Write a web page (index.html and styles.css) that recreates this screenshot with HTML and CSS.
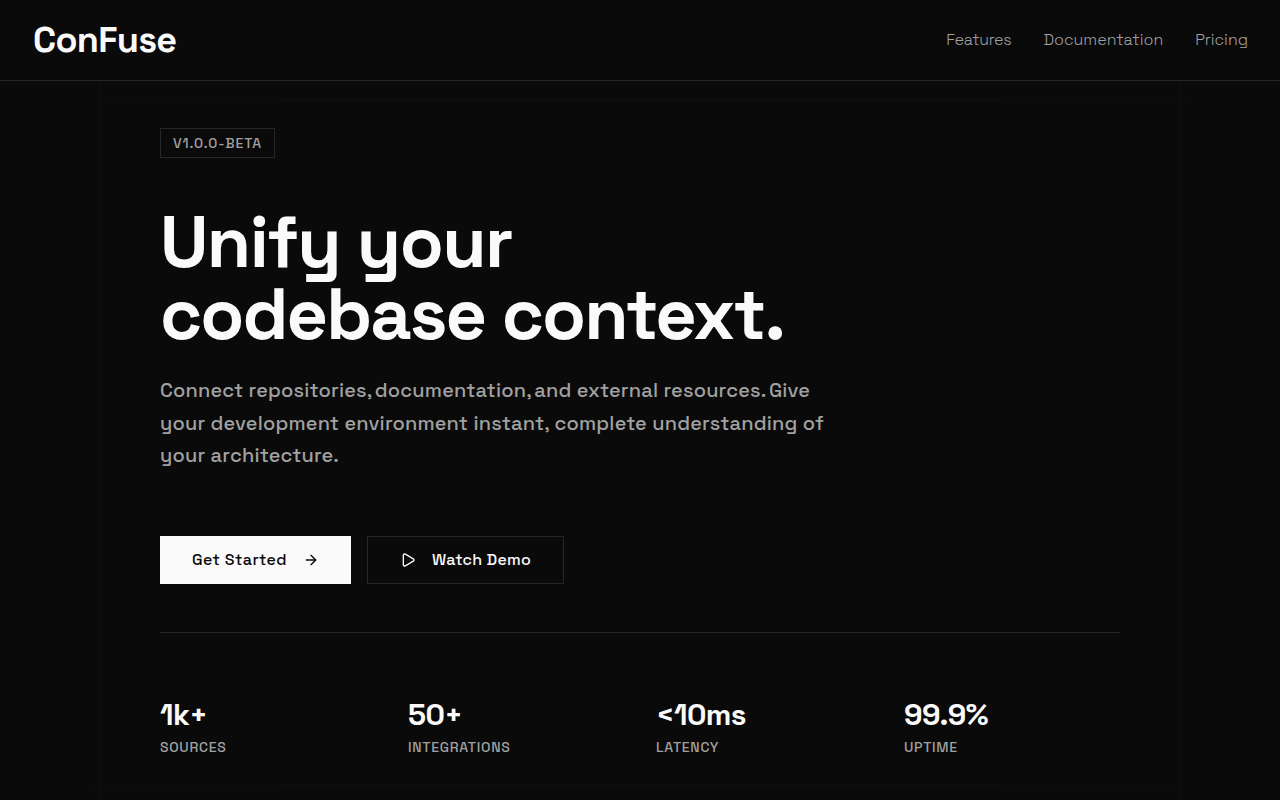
FILE: index.html
```
<!DOCTYPE html>
<html lang="en">
<head>
	<meta charset="utf-8">
	<title>ConFuse</title>
	<link rel="stylesheet" href="styles.css">
</head>
<body>
	<header class="header">
		<a class="logo" href="#">ConFuse</a>
		<nav class="nav">
			<a class="nav-first" href="#">Features</a>
			<a href="#">Documentation</a>
			<a href="#">Pricing</a>
		</nav>
	</header>

	<main class="hero">
		<!-- faint guide lines -->
		<span class="line line-left"></span>
		<span class="line line-right"></span>
		<span class="line line-top"></span>
		<span class="line line-bottom"></span>

		<div class="container">
			<div class="badge">V1.0.0-BETA</div>

			<h1 class="title">Unify your<br><span class="title-tight">codebase context.</span></h1>

			<p class="desc">
				Connect repositories,<span class="gap"> </span>documentation,<span class="gap"> </span>and external resources.<span class="gap"> </span>Give
				your development environment instant, complete understanding of
				your architecture.
			</p>

			<div class="actions">
				<a class="btn btn-primary" href="#">
					Get Started
					<svg width="16" height="16" viewBox="0 0 24 24">
						<path d="M5 12h14"/>
						<path d="m12 5 7 7-7 7"/>
					</svg>
				</a>
				<a class="btn btn-outline" href="#">
					<svg width="16" height="16" viewBox="0 0 24 24">
						<path d="M5 5a2 2 0 0 1 3.008-1.728l11.997 6.998a2 2 0 0 1 .003 3.458l-12 7A2 2 0 0 1 5 19z"/>
					</svg>
					Watch Demo
				</a>
			</div>

			<div class="stats">
				<div class="stat">
					<div class="stat-value">1k+</div>
					<div class="stat-label">SOURCES</div>
				</div>
				<div class="stat">
					<div class="stat-value">50+</div>
					<div class="stat-label">INTEGRATIONS</div>
				</div>
				<div class="stat">
					<div class="stat-value">&lt;10ms</div>
					<div class="stat-label">LATENCY</div>
				</div>
				<div class="stat">
					<div class="stat-value">99.9%</div>
					<div class="stat-label">UPTIME</div>
				</div>
			</div>
		</div>
	</main>
</body>
</html>
```
FILE: styles.css
```
*{
	margin: 0;
	padding: 0;
	box-sizing: border-box;
}
body{
	height: 100vh;
	overflow: hidden;
	display: flex;
	flex-direction: column;
	background: #0a0a0a;
	color: #fafafa;
	font-family: "Space Grotesk", Inter, sans-serif;
}
a{
	color: inherit;
	text-decoration: none;
}

/* header */
.header{
	height: 81px;
	flex: none;
	padding: 0 32px;
	display: flex;
	align-items: center;
	justify-content: space-between;
	border-bottom: 1px solid #262626;
}
.logo{
	padding-left: 1px;
	font-size: 36px;
	font-weight: 700;
	line-height: 40px;
	letter-spacing: -0.02em;
}
.nav{
	display: flex;
	gap: 32px;
	font-size: 16px;
	font-weight: 350;
	line-height: 24px;
	color: #a1a1a1;
}
.nav-first{
	letter-spacing: -0.02em;
}

/* hero */
.hero{
	flex: 1;
	position: relative;
	padding-top: 47px;
}
.line{
	position: absolute;
	background: #0e0e0e;
}
.line-left, .line-right{
	top: 0;
	bottom: 0;
	width: 1px;
}
.line-left{
	left: 100px;
}
.line-right{
	right: 99px;
}
.line-top, .line-bottom{
	left: 0;
	right: 0;
	height: 1px;
	background: linear-gradient(to right, #0a0a0a, #101010 30%, #101010 70%, #0a0a0a);
}
.line-top{
	top: 18px;
}
.line-bottom{
	bottom: 14px;
}
.container{
	position: relative;
	width: 960px;
	margin: 0 auto;
}
.badge{
	width: fit-content;
	height: 30px;
	padding: 4px 12px;
	border: 1px solid #262626;
	font-size: 14px;
	font-weight: 500;
	line-height: 20px;
	letter-spacing: 0.88px;
	color: #a1a1a1;
}
.title{
	margin-top: 48px;
	font-size: 72px;
	font-weight: 700;
	line-height: 1;
	letter-spacing: -0.021em;
}
.title-tight{
	letter-spacing: -0.026em;
}
.desc{
	max-width: 672px;
	margin-top: 24px;
	font-size: 20px;
	font-weight: 500;
	line-height: 1.625;
	letter-spacing: 0.18px;
	color: #a1a1a1;
}
.gap{
	word-spacing: -2.8px;
}
.actions{
	margin-top: 64.5px;
	display: flex;
	gap: 16px;
}
.btn{
	height: 48px;
	padding: 0 32px;
	display: flex;
	align-items: center;
	gap: 16px;
	font-size: 16px;
	font-weight: 500;
	line-height: 24px;
}
.btn svg{
	fill: none;
	stroke: currentColor;
	stroke-width: 2;
	stroke-linecap: round;
	stroke-linejoin: round;
}
.btn-primary{
	background: #fafafa;
	color: #0a0a0a;
	letter-spacing: 0.44px;
}
.btn-outline{
	border: 1px solid #262626;
	letter-spacing: 0.23px;
}

/* stats */
.stats{
	margin-top: 48px;
	padding-top: 64px;
	border-top: 1px solid #262626;
	display: grid;
	grid-template-columns: repeat(4, 1fr);
	gap: 32px;
}
.stat-value{
	font-size: 30px;
	font-weight: 700;
	line-height: 36px;
	letter-spacing: -0.02em;
}
.stat-label{
	margin-top: 4px;
	font-size: 14px;
	font-weight: 500;
	line-height: 20px;
	letter-spacing: 0.05em;
	color: #a1a1a1;
}
```
